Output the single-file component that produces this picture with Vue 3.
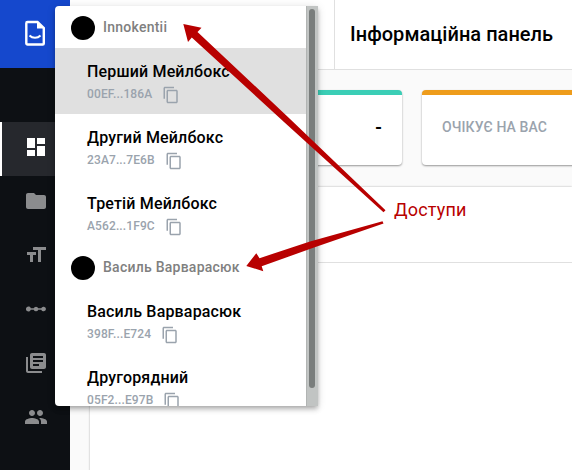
<script setup>
const nav = [
  { name: 'dashboard', active: true, d: 'M3 13h8V3H3v10zm0 8h8v-6H3v6zm10 0h8V11h-8v10zm0-18v6h8V3h-8z' },
  { name: 'folder', d: 'M10 4H4c-1.1 0-2 .9-2 2v12c0 1.1.9 2 2 2h16c1.1 0 2-.9 2-2V8c0-1.1-.9-2-2-2h-8l-2-2z' },
  { name: 'fields', d: 'M9 4v3h5v12h3V7h5V4H9zm-6 8h3v7h3v-7h3V9H3v3z' },
  { name: 'flow', d: 'M22 12a2.5 2.5 0 0 1-4.8.8h-2.9a2.5 2.5 0 0 1-4.6 0H6.8a2.5 2.5 0 1 1 0-1.6h2.9a2.5 2.5 0 0 1 4.6 0h2.9A2.5 2.5 0 0 1 22 12z' },
  { name: 'library', d: 'M4 6H2v14c0 1.1.9 2 2 2h14v-2H4V6zm16-4H8c-1.1 0-2 .9-2 2v12c0 1.1.9 2 2 2h12c1.1 0 2-.9 2-2V4c0-1.1-.9-2-2-2zm-1 9H9V9h10v2zm-4 4H9v-2h6v2zm4-8H9V5h10v2z' },
  { name: 'people', d: 'M16 11c1.66 0 2.99-1.34 2.99-3S17.66 5 16 5c-1.66 0-3 1.34-3 3s1.34 3 3 3zm-8 0c1.66 0 2.99-1.34 2.99-3S9.66 5 8 5C6.34 5 5 6.34 5 8s1.34 3 3 3zm0 2c-2.33 0-7 1.17-7 3.5V19h14v-2.5c0-2.33-4.67-3.5-7-3.5zm8 0c-.29 0-.62.02-.97.05 1.16.84 1.97 1.97 1.97 3.45V19h6v-2.5c0-2.33-4.67-3.5-7-3.5z' },
]
const groups = [
  {
    owner: 'Innokentii',
    boxes: [
      { title: 'Перший Мейлбокс', code: '00EF...186A', selected: true },
      { title: 'Другий Мейлбокс', code: '23A7...7E6B' },
      { title: 'Третій Мейлбокс', code: 'A562...1F9C' },
    ],
  },
  {
    owner: 'Василь Варварасюк',
    boxes: [
      { title: 'Василь Варварасюк', code: '398F...E724' },
      { title: 'Другорядний', code: '05F2...E97B' },
    ],
  },
]
</script>

<template>
  <div class="page">
    <aside class="sidebar">
      <div class="logo">
        <svg width="20" height="26" viewBox="0 0 20 26">
          <path d="M2.5 2H12.500l6.300 6V23.500a1 1 0 0 1-1 1H2.500a1.200 1.200 0 0 1-1.200-1.200V3.200a1.200 1.200 0 0 1 1.200-1.200z" fill="none" stroke="#fff" stroke-width="2.400" />
          <path d="M12 1v7.500h7.500z" fill="#fff" />
          <path d="M4.500 15.500c3 3 8 3 11 0" fill="none" stroke="#fff" stroke-width="2" />
        </svg>
      </div>
      <nav>
        <a v-for="n in nav" :key="n.name" class="nav-item" :class="{ active: n.active }">
          <svg width="24" height="24" viewBox="0 0 24 24"><path :d="n.d" fill="currentColor" /></svg>
        </a>
      </nav>
    </aside>

    <main class="main">
      <header class="top">
        <div class="account"></div>
        <h1>Інформаційна панель</h1>
      </header>
      <section class="content">
        <div class="cards">
          <div class="card green"><b>-</b></div>
          <div class="card orange"><span>ОЧІКУЄ НА ВАС</span></div>
        </div>
        <div class="panel"><div class="panel-head"></div></div>
      </section>
    </main>

    <div class="menu">
      <div class="list">
        <template v-for="g in groups" :key="g.owner">
          <div class="owner"><i class="avatar"></i><span>{{ g.owner }}</span></div>
          <div v-for="b in g.boxes" :key="b.code" class="box" :class="{ selected: b.selected }">
            <div class="title">{{ b.title }}</div>
            <div class="code">
              <span>{{ b.code }}</span>
              <svg width="18" height="18" viewBox="0 0 24 24"><path fill="currentColor" d="M16 1H4c-1.100 0-2 .9-2 2v14h2V3h12V1zm3 4H8c-1.100 0-2 .9-2 2v14c0 1.100.9 2 2 2h11c1.100 0 2-.9 2-2V7c0-1.100-.9-2-2-2zm0 16H8V7h11v14z" /></svg>
            </div>
          </div>
        </template>
      </div>
      <div class="track"><div class="thumb"></div></div>
    </div>

    <svg class="arrows" width="572" height="470" viewBox="0 0 572 470">
      <path d="M183.300 24L201.500 27.700 197.500 32 289.500 118.500 385.500 210.300 383.500 212.300 284 122 191.800 37.500 188 42z" />
      <path d="M246.300 266L256.300 253.200 259.500 258.200 310 241.500 382.500 221.300 383.500 223.500 314 247.500 261.700 266.300 263.300 271.200z" />
    </svg>
    <div class="note">Доступи</div>
  </div>
</template>

<style>
body { margin: 0; overflow: hidden; }
</style>

<style scoped>
* { box-sizing: border-box; }
.page { position: relative; display: flex; width: 572px; height: 470px; overflow: hidden; background: #fafafa; font-family: Roboto, sans-serif; color: #000; }
.sidebar { width: 70px; flex: none; background: #0d1014; }
.logo { height: 68px; background: #1548cd; padding: 20px 0 0 25px; }
.logo svg { display: block; }
nav { padding-top: 54px; }
.nav-item { display: flex; height: 54px; padding: 13px 0 0 24px; color: #8b8c8e; }
.nav-item.active { background: #26282d; color: #fff; padding-left: 22px; border-left: 2px solid #fff; }
.main { flex: 1; min-width: 0; }
.top { display: flex; height: 70px; background: #fff; border-bottom: 1px solid #e0e0e0; }
.account { width: 265px; flex: none; border-right: 1px solid #e0e0e0; }
h1 { margin: 0; padding-left: 15px; font-size: 20px; font-weight: 500; line-height: 68px; letter-spacing: .03px; white-space: nowrap; }
.content { padding: 20px 0 0 20px; }
.cards { display: flex; gap: 20px; }
.card { flex: none; width: 312px; height: 75px; border-radius: 4px; border-top: 5px solid #3bceb6; background: #fff; box-shadow: 0 1px 2px rgba(0, 0, 0, .4); display: flex; align-items: center; padding: 0 20px 6px 20px; }
.card b { margin-left: auto; font-size: 18px; font-weight: 700; }
.card.orange { border-top-color: #ee9c1b; }
.card span { font-size: 14px; font-weight: 500; line-height: 20px; letter-spacing: .1px; color: #9aa3ad; }
.panel { margin-top: 22px; height: 300px; background: #fff; box-shadow: 0 0 2px rgba(0, 0, 0, .3); }
.panel-head { height: 76px; border-bottom: 1px solid #e0e0e0; }
.menu { position: absolute; left: 55px; top: 6px; width: 263px; height: 400px; display: flex; background: #fff; border-radius: 4px 0 0 4px; box-shadow: 0 2px 4px -1px rgba(0, 0, 0, .2), 0 4px 5px rgba(0, 0, 0, .14), 0 1px 10px rgba(0, 0, 0, .12); }
.list { width: 251px; height: 400px; overflow: hidden; border-radius: 4px 0 0 4px; }
.owner { display: flex; align-items: center; height: 42px; padding: 2px 0 0 16px; gap: 8px; font-size: 14px; font-weight: 500; letter-spacing: .25px; color: #808080; }
.owner span { position: relative; top: -1px; }
.avatar { width: 24px; height: 24px; border-radius: 50%; background: #000; }
.box { height: 66px; padding: 12px 0 0 32px; }
.box.selected { background: #e0e0e0; }
.title { font-size: 16px; font-weight: 500; line-height: 24px; letter-spacing: .17px; white-space: nowrap; }
.code { display: flex; gap: 10px; color: #9aa3ad; font-size: 12px; font-weight: 500; line-height: 20px; letter-spacing: .12px; }
.code svg { margin-top: 1.500px; }
.track { width: 12px; background: #c1c4c3; border-left: 1px solid #b1b4b3; padding: 3px 3px 0 2px; }
.thumb { height: 379px; border-radius: 3px; background: #797d7c; }
.arrows { position: absolute; left: 0; top: 0; fill: #b80000; }
.note { position: absolute; left: 394px; top: 198px; font-size: 18px; line-height: 24px; letter-spacing: .2px; color: #b80000; }
</style>
